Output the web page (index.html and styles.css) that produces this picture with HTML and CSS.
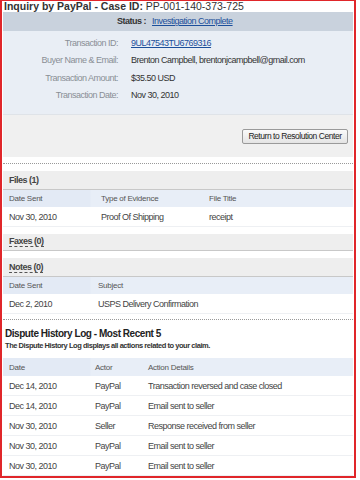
FILE: index.html
```html
<!DOCTYPE html>
<html>
<head>
<meta charset="utf-8">
<link rel="stylesheet" href="styles.css">
</head>
<body>
<div class="frame">
  <div class="title"><b>Inquiry by PayPal - Case ID:</b> PP-001-140-373-725</div>
  <div class="status"><b>Status :</b> <a class="link" href="#">Investigation Complete</a></div>
  <div class="details">
    <div class="drow"><span class="lbl">Transaction ID:</span><a class="link val" href="#">9UL47543TU6769316</a></div>
    <div class="drow"><span class="lbl">Buyer Name &amp; Email:</span><span class="val">Brenton Campbell, brentonjcampbell@gmail.com</span></div>
    <div class="drow"><span class="lbl">Transaction Amount:</span><span class="val">$35.50 USD</span></div>
    <div class="drow"><span class="lbl">Transaction Date:</span><span class="val">Nov 30, 2010</span></div>
  </div>
  <div class="btnarea"><button class="btn">Return to Resolution Center</button></div>
  <div class="dots"></div>

  <div class="sec"><span class="sechead">Files (1)</span></div>
  <div class="thead files"><span>Date Sent</span><span>Type of Evidence</span><span>File Title</span></div>
  <div class="trow files"><span>Nov 30, 2010</span><span>Proof Of Shipping</span><span>receipt</span></div>

  <div class="sec faxes"><span class="sechead u">Faxes (0)</span></div>
  <div class="sec notes"><span class="sechead u">Notes (0)</span></div>
  <div class="thead notesg"><span>Date Sent</span><span>Subject</span></div>
  <div class="trow notesg"><span>Dec 2, 2010</span><span>USPS Delivery Confirmation</span></div>
  <div class="dots d2"></div>

  <h2 class="hist">Dispute History Log - Most Recent 5</h2>
  <p class="histsub">The Dispute History Log displays all actions related to your claim.</p>
  <div class="thead hg"><span>Date</span><span>Actor</span><span>Action Details</span></div>
  <div class="trow hg"><span>Dec 14, 2010</span><span>PayPal</span><span>Transaction reversed and case closed</span></div>
  <div class="trow hg"><span>Dec 14, 2010</span><span>PayPal</span><span>Email sent to seller</span></div>
  <div class="trow hg"><span>Nov 30, 2010</span><span>Seller</span><span>Response received from seller</span></div>
  <div class="trow hg"><span>Nov 30, 2010</span><span>PayPal</span><span>Email sent to seller</span></div>
  <div class="trow hg"><span>Nov 30, 2010</span><span>PayPal</span><span>Email sent to seller</span></div>
</div>
</body>
</html>
```
FILE: styles.css
```css
html, body { margin: 0; padding: 0; background: #fff; }
body {
  font-family: "Liberation Sans", Arial, sans-serif; font-size: 9px; letter-spacing: -0.5px; color: #333;
}
.frame {
  width: 350px; height: 475px;
  border: 2px solid #e0262a;
  border-top-width: 1px;
  overflow: hidden;
  padding-left: 1px;
  padding-right: 1px;
}
.title {
  height: 11px; line-height: 11px; font-size: 10.5px; letter-spacing: 0; padding-left: 1px; color: #333;
}
.status {
  height: 19px; line-height: 19px; background: #c9d2dd;
  padding-left: 114px; color: #333;
}
.status b { margin-right: 4px; }
.link { color: #1c4f9b; text-decoration: underline; }
.details {
  background: #e9eef5; height: 84px; box-sizing: border-box;
  padding-top: 3px; border-bottom: 1px solid #dfe3e8;
}
.drow { display: flex; height: 17.5px; align-items: center; }
.lbl { width: 115px; text-align: right; color: #8a8f96; flex: none; }
.val { margin-left: 13px; color: #333; }
.details .link.val { color: #1c4f9b; }
.btnarea {
  background: #f0f0f0; height: 42px; display: flex; justify-content: flex-end; align-items: center;
  padding-right: 5px;
}
.btn {
  font-family: "Liberation Sans", Arial, sans-serif; font-size: 8.5px; letter-spacing: -0.45px; color: #222;
  background: linear-gradient(#fafafa, #e4e4e4); border: 1px solid #9a9a9a; border-radius: 2px;
  height: 15px; width: 106px; padding: 0; line-height: 12px; white-space: nowrap;
}
.dots { height: 6px; border-bottom: 1px dotted #999; margin: 0 0 7px 0; }
.sec {
  background: #eeeeee; height: 18px; line-height: 18px; padding-left: 6px; border-bottom: 1px solid #c8c8c8;
}
.sechead { font-weight: bold; color: #444; }
.sechead.u { border-bottom: 1px dashed #555; }
.faxes { margin-top: 7px; height: 16px; line-height: 14px; }
.notes { margin-top: 7px; height: 18px; line-height: 19px; }
.thead {
  background: linear-gradient(90deg, #e3eaf5 0, #e3eaf5 87px, #e8eef7 88px);
  height: 17px; display: flex; align-items: center; font-size: 8px; letter-spacing: -0.25px; color: #555;
  padding-left: 6px;
}
.trow {
  display: flex; align-items: center; height: 19px; border-bottom: 1px solid #eef0f3; padding-left: 6px;
  color: #444;
}
.files span:nth-child(1) { width: 92px; }
.files span:nth-child(2) { width: 108px; }
.notesg span:nth-child(1) { width: 89px; }
.hg span:nth-child(1) { width: 86px; }
.hg span:nth-child(2) { width: 53px; }
.d2 { margin-bottom: 0; height: 5px; }
.hist {
  margin: 0; padding: 7px 0 0 2px; font-size: 10px; letter-spacing: -0.45px; font-weight: bold; color: #222;
  height: 13px; line-height: 14px;
}
.histsub {
  margin: 0; padding: 1px 0 0 2px; font-size: 7.5px; letter-spacing: -0.45px; font-weight: bold; color: #333;
  height: 17px; line-height: 10px;
}
.hg.thead { height: 18px; }
```
